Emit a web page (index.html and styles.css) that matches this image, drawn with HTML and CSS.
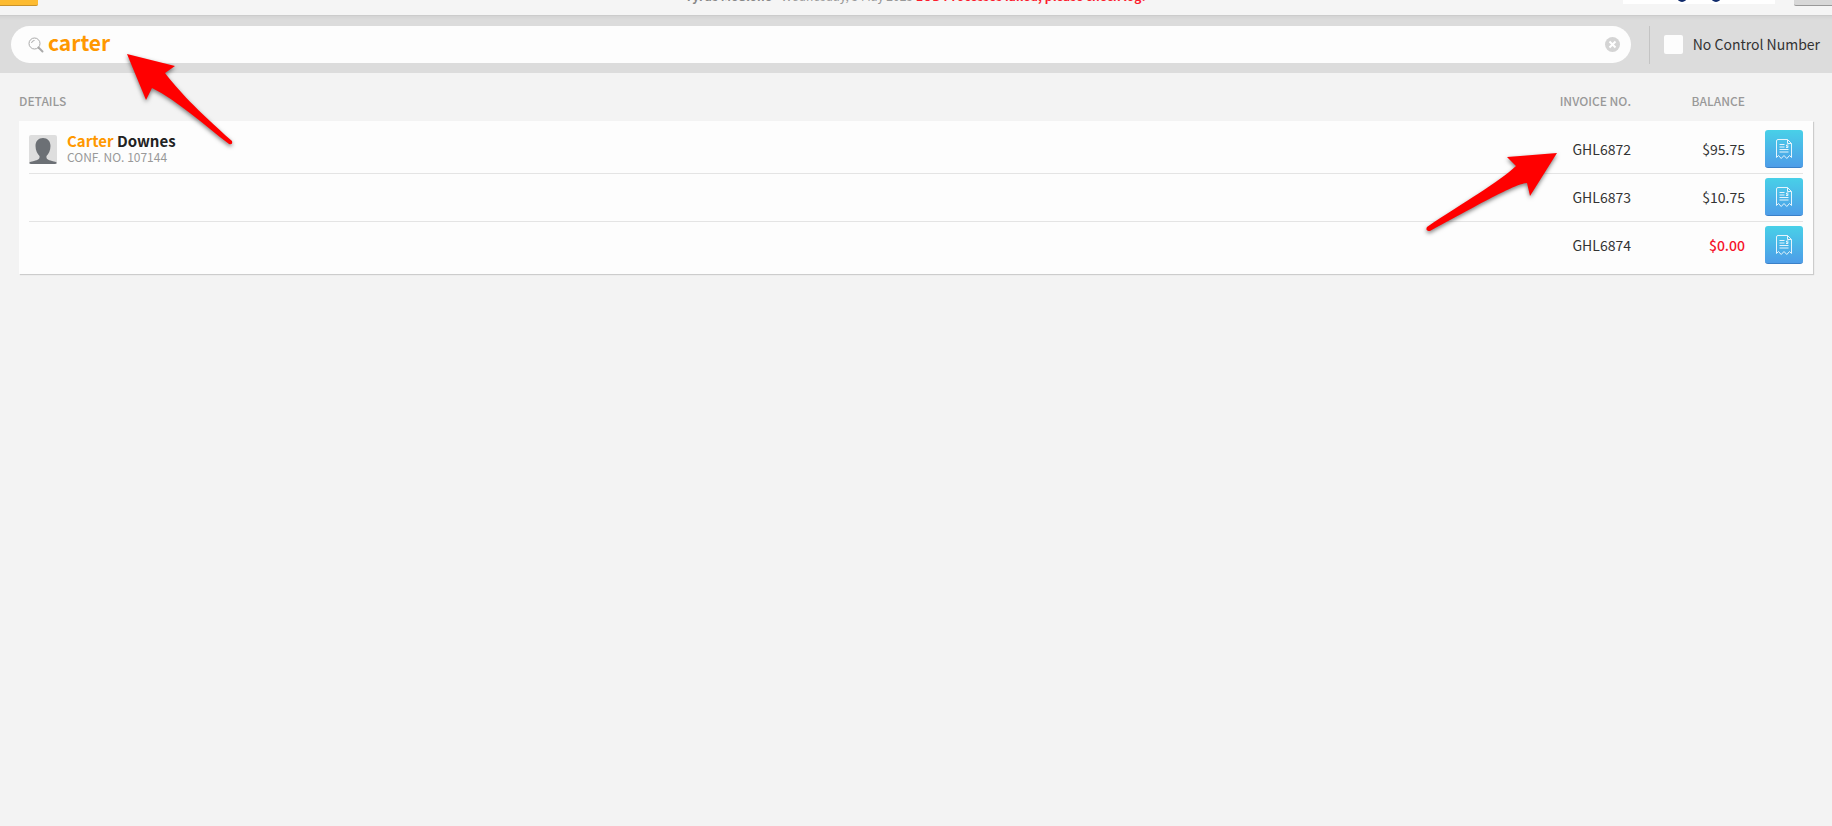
FILE: index.html
```html
<!DOCTYPE html>
<html lang="en">
<head>
  <meta charset="UTF-8">
  <title>Invoice search</title>
  <link rel="stylesheet" href="styles.css">
</head>
<body>

  <svg class="symbols" aria-hidden="true">
    <symbol id="receipt" viewBox="0 0 18 22">
      <path d="M1.5 19.500V3Q1.500 1.500 3 1.500H12.500L16.500 5.500V19.500L14.500 17.500 11.800 20.500 9 17.500 6.200 20.500 3.500 17.500Z M12.500 1.500V5.500H16.500" />
      <path d="M4.500 6.500H9.500 M4.500 9H9.500 M4.500 11.500H13.500 M4.500 14H13.500 M13.500 7H11.500V8.200H13V9.500H11" />
    </symbol>
  </svg>

  <header class="topbar">
    <button class="menu-btn" type="button" aria-label="Menu"></button>
    <p class="status"><b>Tyrus McGlone</b> - Wednesday, 3 May 2023 <strong>EOD Processes failed, please check log!</strong></p>
    <div class="brand">
      <svg width="152" height="4" viewBox="0 0 152 4">
        <circle cx="59" cy="-3" r="5" />
        <circle cx="93" cy="-3" r="5" />
      </svg>
    </div>
    <button class="side-btn" type="button" aria-label="Account"></button>
  </header>

  <form class="searchbar">
    <div class="search">
      <svg class="search-icon" width="16" height="16" viewBox="0 0 16 16">
        <circle cx="6.500" cy="6.500" r="5.500" />
        <path d="M3.500 6Q4 3.500 6.500 3.500" />
        <path class="handle" d="M10.500 10.500L14.500 14.500" />
      </svg>
      <input class="search-input" type="text" value="carter" aria-label="Search">
      <button class="clear-btn" type="button" aria-label="Clear">
        <svg width="15" height="15" viewBox="0 0 15 15">
          <circle cx="7.500" cy="7.500" r="7.500" />
          <path d="M4.500 4.500L10.500 10.500M10.500 4.500L4.500 10.500" />
        </svg>
      </button>
    </div>
    <label class="filter"><input type="checkbox"><span>No Control Number</span></label>
  </form>

  <main class="results">
    <table>
      <thead>
        <tr>
          <th class="details">Details</th>
          <th class="invoice">Invoice No.</th>
          <th class="balance">Balance</th>
          <th class="action"></th>
        </tr>
      </thead>
      <tbody>
        <tr>
          <td class="details">
            <div class="guest">
              <svg class="avatar" width="28" height="29" viewBox="0 0 28 29">
                <path d="M14 3C9.500 3 6.500 6 6.500 11C6.500 15.500 8.500 19 10.500 21C11 24 9 25 5 26C2 26.500 1 27 0 28V29H28V28C27 27 26 26.500 23 26C19 25 17 24 17.500 21C19.500 19 21.500 15.500 21.500 11C21.500 6 18.500 3 14 3Z" />
              </svg>
              <div>
                <div class="name"><mark>Carter</mark> Downes</div>
                <div class="conf">CONF. NO. 107144</div>
              </div>
            </div>
          </td>
          <td class="invoice">GHL6872</td>
          <td class="balance">$95.75</td>
          <td class="action"><button class="open-btn" type="button" aria-label="Open GHL6872"><svg width="18" height="22"><use href="#receipt" /></svg></button></td>
        </tr>
        <tr>
          <td class="details"></td>
          <td class="invoice">GHL6873</td>
          <td class="balance">$10.75</td>
          <td class="action"><button class="open-btn" type="button" aria-label="Open GHL6873"><svg width="18" height="22"><use href="#receipt" /></svg></button></td>
        </tr>
        <tr>
          <td class="details"></td>
          <td class="invoice">GHL6874</td>
          <td class="balance zero">$0.00</td>
          <td class="action"><button class="open-btn" type="button" aria-label="Open GHL6874"><svg width="18" height="22"><use href="#receipt" /></svg></button></td>
        </tr>
      </tbody>
    </table>
  </main>

  <!-- callout arrows -->
  <svg class="arrow arrow-search" width="112" height="98" viewBox="0 0 112 98">
    <path d="M3 3L51 15L41 22C54 39 72 58 108 90Q109 94 105 93C80 74 54 50 28 37L22 49Z" />
  </svg>
  <svg class="arrow arrow-invoice" width="138" height="86" viewBox="0 0 138 86">
    <path d="M133 3L106 46L103 33C92 34 70 46 6 81Q1 81 3 77C40 52 75 32 92 16L83 7Z" />
  </svg>

</body>
</html>
```
FILE: styles.css
```css
* {
  box-sizing: border-box;
}

body {
  margin: 0;
  min-height: 100vh;
  position: relative;
  background: #f3f3f3;
  color: #333;
  font-family: "Noto Sans CJK SC", "Noto Sans", sans-serif;
  font-size: 14px;
}

button {
  padding: 0;
  border: none;
  cursor: pointer;
}

.symbols {
  display: none;
}

/* top bar */
.topbar {
  display: flex;
  align-items: flex-start;
  height: 16px;
  overflow: hidden;
  background: #f5f5f5;
  border-bottom: 1px solid #ccc;
}

.menu-btn {
  width: 38px;
  height: 6px;
  background: #fdbb30;
  border-bottom: 1px solid #c8922a;
  border-radius: 0 0 2px 0;
}

.status {
  flex: 1;
  margin: -14px 0 0;
  padding-left: 170px;
  text-align: center;
  font-size: 12px;
  line-height: 20px;
  color: #999;
}

.status b {
  color: #888;
}

.status strong {
  color: #fc1c2e;
}

.brand {
  width: 152px;
  height: 4px;
  background: #fff;
}

.brand svg {
  display: block;
  fill: #0f2a6b;
}

.side-btn {
  width: 38px;
  height: 6px;
  margin-left: 19px;
  background: #d8d8d8;
  border-bottom: 1px solid #999;
  border-radius: 0 0 0 2px;
}

/* search */
.searchbar {
  display: flex;
  align-items: center;
  height: 57px;
  padding: 0 12px 0 11px;
  background: linear-gradient(#d4d4d4, #dcdcdc 4px);
}

.search {
  flex: 1;
  display: flex;
  align-items: center;
  height: 37px;
  padding: 0 11px 0 17px;
  background: #fdfdfd;
  border-radius: 19px;
}

.search-icon {
  fill: none;
  stroke: #aaa;
}

.search-icon .handle {
  stroke-width: 2;
  stroke-linecap: round;
}

.search-input {
  flex: 1;
  height: 37px;
  padding: 0 0 6px;
  margin-left: 4px;
  border: none;
  outline: none;
  background: none;
  color: #ff9800;
  font-family: inherit;
  font-size: 21px;
  font-weight: bold;
}

.clear-btn {
  background: none;
  height: 15px;
}

.clear-btn svg {
  display: block;
  fill: #d4d4d4;
  stroke: none;
}

.clear-btn path {
  stroke: #fff;
  stroke-width: 2;
}

.filter {
  display: flex;
  align-items: center;
  height: 38px;
  margin-left: 18px;
  padding-left: 14px;
  border-left: 1px solid #c4c4c4;
}

.filter input {
  appearance: none;
  width: 19px;
  height: 19px;
  margin: 0 10px 0 0;
  background: #fdfdfd;
  border-radius: 2px;
}

.filter span {
  padding-bottom: 2px;
}

/* results */
.results {
  padding: 0 19px;
}

table {
  width: 100%;
  border-spacing: 0;
}

th {
  height: 48px;
  padding: 6px 0 0;
  font-size: 12px;
  font-weight: 500;
  color: #999;
  text-transform: uppercase;
}

tbody {
  background: #fdfdfd;
  box-shadow: 1px 1px 1px #ccc;
}

td {
  padding: 4px 0 6px;
  border-bottom: 1px solid #e4e4e4;
}

tbody tr:first-child td {
  padding-top: 9px;
}

tbody tr:last-child td {
  padding-bottom: 10px;
  border-bottom: none;
}

.details {
  text-align: left;
}

.invoice,
.balance {
  width: 114px;
  text-align: right;
}

.action {
  width: 68px;
}

/* row lines stop short of the card edges */
td.details,
td.action {
  border-bottom: none;
  background: linear-gradient(#e4e4e4, #e4e4e4) right bottom / calc(100% - 10px) 1px no-repeat;
}

td.action {
  background-position: left bottom;
  padding-left: 20px;
}

tr:last-child td.details,
tr:last-child td.action {
  background: none;
}

.guest {
  display: flex;
  align-items: center;
  gap: 10px;
  padding-left: 10px;
}

.avatar {
  background: #dedede;
  border-radius: 2px;
  fill: #6c7075;
}

.name {
  font-size: 15px;
  font-weight: bold;
  line-height: 16px;
  color: #222;
}

.name mark {
  background: none;
  color: #ff9800;
}

.conf {
  font-size: 12px;
  line-height: 16px;
  color: #999;
}

.zero {
  color: #f5142b;
  font-weight: 500;
}

.open-btn {
  display: flex;
  align-items: center;
  justify-content: center;
  width: 38px;
  height: 38px;
  background: linear-gradient(#48d0e8, #4d9de8);
  border-bottom: 1px solid #3a80c8;
  border-radius: 3px;
}

.open-btn svg {
  fill: none;
  stroke: #e4f4fc;
}

/* callouts */
.arrow {
  position: absolute;
  fill: #f00;
  filter: drop-shadow(0 2px 2px rgba(0, 0, 0, 0.5));
}

.arrow-search {
  top: 51px;
  left: 124px;
}

.arrow-invoice {
  top: 150px;
  left: 1424px;
}
```
